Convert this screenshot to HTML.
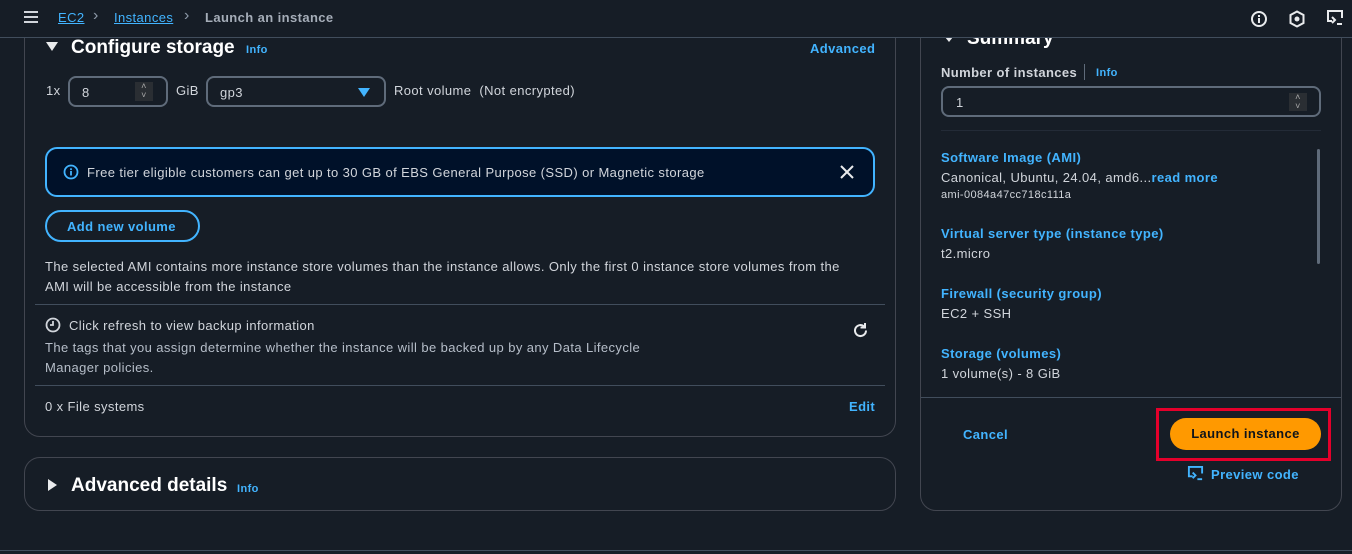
<!DOCTYPE html>
<html><head><meta charset="utf-8"><style>
*{box-sizing:border-box;margin:0;padding:0}
body{width:1352px;height:554px;background:#161d26;font-family:"Liberation Sans",sans-serif;color:#d1d5db;font-size:13px;letter-spacing:0.4px;position:relative;overflow:hidden}
.a{position:absolute}
.hdr{left:0;top:0;width:1352px;height:38px;border-bottom:1px solid #414d5c;background:#161d26;z-index:5}
.z{z-index:6}
.link{color:#42b4ff}
.b{font-weight:bold}
.card{border:1px solid #424650;border-radius:16px}
.info{color:#42b4ff;font-weight:bold;font-size:11px}
.inp{border:2px solid #5f6b7a;border-radius:8px}
.bl{color:#42b4ff;font-weight:bold}
</style></head><body>
<div class="a hdr"></div>
<div class="a z" style="left:24px;top:11px;width:14px;height:2px;background:#d1d5db;box-shadow:0 5px 0 #d1d5db,0 10px 0 #d1d5db"></div>
<div class="a link z" style="left:58px;top:10px;font-size:13px;text-decoration:underline">EC2</div>
<div class="a z" style="left:93px;top:7px;color:#8d99a8;font-size:16px">&#x203A;</div>
<div class="a link z" style="left:114px;top:10px;text-decoration:underline">Instances</div>
<div class="a z" style="left:184px;top:7px;color:#8d99a8;font-size:16px">&#x203A;</div>
<div class="a b z" style="left:205px;top:10px;color:#a5adb8">Launch an instance</div>
<svg class="a z" style="left:1250px;top:10px" width="18" height="18" viewBox="0 0 18 18"><circle cx="9" cy="9" r="7" fill="none" stroke="#e9ebed" stroke-width="2"/><rect x="8" y="8" width="2" height="5" fill="#e9ebed"/><rect x="8" y="5" width="2" height="2" fill="#e9ebed"/></svg>
<svg class="a z" style="left:1288px;top:10px" width="18" height="18" viewBox="0 0 18 18"><path d="M9 1.5L15.5 5v8L9 16.5 2.5 13V5z" fill="none" stroke="#e9ebed" stroke-width="2"/><circle cx="9" cy="9" r="2.5" fill="#e9ebed"/></svg>
<svg class="a z" style="left:1326px;top:9px" width="18" height="18" viewBox="0 0 18 18"><path d="M6 12H2V2h14v7" fill="none" stroke="#e9ebed" stroke-width="2"/><path d="M6 8l3 3-3 3M11 15h5" fill="none" stroke="#e9ebed" stroke-width="2"/></svg>

<!-- left card -->
<div class="a card" style="left:24px;top:-20px;width:872px;height:457px"></div>
<div class="a" style="left:46px;top:42px;width:0;height:0;border-left:6px solid transparent;border-right:6px solid transparent;border-top:9px solid #e9ebed"></div>
<div class="a b" style="left:71px;top:37px;font-size:19px;color:#fff;letter-spacing:0">Configure storage</div>
<div class="a info" style="left:246px;top:44px">Info</div>
<div class="a bl" style="left:810px;top:41px">Advanced</div>
<div class="a" style="left:46px;top:83px">1x</div>
<div class="a inp" style="left:68px;top:76px;width:100px;height:31px"></div>
<div class="a" style="left:82px;top:85px">8</div>
<div class="a" style="left:135px;top:82px;width:18px;height:19px;background:#2a2e33;color:#aaa;font-size:9px;text-align:center;line-height:9px">&#x2C4;<br>&#x2C5;</div>
<div class="a" style="left:176px;top:83px">GiB</div>
<div class="a inp" style="left:206px;top:76px;width:180px;height:31px"></div>
<div class="a" style="left:220px;top:85px">gp3</div>
<div class="a" style="left:358px;top:88px;border-left:6px solid transparent;border-right:6px solid transparent;border-top:9px solid #42b4ff"></div>
<div class="a" style="left:394px;top:83px">Root volume&nbsp; (Not encrypted)</div>

<div class="a" style="left:45px;top:147px;width:830px;height:50px;background:#001129;border:2px solid #42b4ff;border-radius:12px"></div>
<svg class="a" style="left:63px;top:164px" width="16" height="16" viewBox="0 0 16 16"><circle cx="8" cy="8" r="6.5" fill="none" stroke="#42b4ff" stroke-width="1.8"/><rect x="7.1" y="7" width="1.8" height="4.5" fill="#42b4ff"/><rect x="7.1" y="4.3" width="1.8" height="1.8" fill="#42b4ff"/></svg>
<div class="a" style="left:87px;top:165px">Free tier eligible customers can get up to 30 GB of EBS General Purpose (SSD) or Magnetic storage</div>
<svg class="a" style="left:840px;top:165px" width="14" height="14" viewBox="0 0 14 14"><path d="M1 1l12 12M13 1L1 13" stroke="#e9ebed" stroke-width="2"/></svg>

<div class="a" style="left:45px;top:210px;width:155px;height:32px;border:2px solid #42b4ff;border-radius:16px"></div>
<div class="a bl" style="left:67px;top:219px">Add new volume</div>
<div class="a" style="left:45px;top:257px;line-height:20px;width:830px">The selected AMI contains more instance store volumes than the instance allows. Only the first 0 instance store volumes from the<br>AMI will be accessible from the instance</div>
<div class="a" style="left:35px;top:304px;width:850px;height:1px;background:#414d5c"></div>
<svg class="a" style="left:45px;top:317px" width="16" height="16" viewBox="0 0 16 16"><circle cx="8" cy="8" r="6.5" fill="none" stroke="#d1d5db" stroke-width="1.8"/><path d="M8 4v4H5" fill="none" stroke="#d1d5db" stroke-width="1.8"/></svg>
<div class="a" style="left:69px;top:318px">Click refresh to view backup information</div>
<div class="a" style="left:45px;top:338px;line-height:20px;width:640px;color:#b6bec9">The tags that you assign determine whether the instance will be backed up by any Data Lifecycle<br>Manager policies.</div>
<svg class="a" style="left:852px;top:322px" width="17" height="17" viewBox="0 0 17 17"><path d="M14 8.5A5.5 5.5 0 1 1 12 4.3" fill="none" stroke="#e9ebed" stroke-width="2"/><path d="M13 1v4.5H8.5" fill="none" stroke="#e9ebed" stroke-width="2"/></svg>
<div class="a" style="left:35px;top:385px;width:850px;height:1px;background:#414d5c"></div>
<div class="a" style="left:45px;top:399px">0 x File systems</div>
<div class="a bl" style="left:849px;top:399px">Edit</div>

<div class="a card" style="left:24px;top:457px;width:872px;height:54px"></div>
<div class="a" style="left:48px;top:479px;border-top:6px solid transparent;border-bottom:6px solid transparent;border-left:9px solid #e9ebed"></div>
<div class="a b" style="left:71px;top:475px;font-size:19px;color:#fff;letter-spacing:0">Advanced details</div>
<div class="a info" style="left:237px;top:483px">Info</div>

<!-- right card -->
<div class="a card" style="left:920px;top:-20px;width:422px;height:531px"></div>
<div class="a" style="left:945px;top:37px;border-left:4px solid transparent;border-right:4px solid transparent;border-top:5px solid #e9ebed"></div>
<div class="a b" style="left:967px;top:28px;font-size:19px;color:#fff;letter-spacing:0">Summary</div>
<div class="a b" style="left:941px;top:65px">Number of instances</div>
<div class="a" style="left:1084px;top:64px;width:1px;height:16px;background:#5f6b7a"></div>
<div class="a info" style="left:1096px;top:67px">Info</div>
<div class="a inp" style="left:941px;top:86px;width:380px;height:31px"></div>
<div class="a" style="left:956px;top:95px">1</div>
<div class="a" style="left:1289px;top:93px;width:18px;height:18px;background:#2a2e33;color:#aaa;font-size:9px;text-align:center;line-height:9px">&#x2C4;<br>&#x2C5;</div>
<div class="a" style="left:941px;top:130px;width:380px;height:1px;background:#232b37"></div>
<div class="a" style="left:1317px;top:149px;width:3px;height:115px;background:#5f6b7a;border-radius:2px"></div>
<div class="a bl" style="left:941px;top:150px">Software Image (AMI)</div>
<div class="a" style="left:941px;top:170px">Canonical, Ubuntu, 24.04, amd6...<span class="bl">read more</span></div>
<div class="a" style="left:941px;top:189px;font-size:11px">ami-0084a47cc718c111a</div>
<div class="a bl" style="left:941px;top:226px">Virtual server type (instance type)</div>
<div class="a" style="left:941px;top:246px">t2.micro</div>
<div class="a bl" style="left:941px;top:286px">Firewall (security group)</div>
<div class="a" style="left:941px;top:306px">EC2 + SSH</div>
<div class="a bl" style="left:941px;top:346px">Storage (volumes)</div>
<div class="a" style="left:941px;top:366px">1 volume(s) - 8 GiB</div>
<div class="a" style="left:921px;top:397px;width:420px;height:1px;background:#414d5c"></div>
<div class="a bl" style="left:963px;top:427px">Cancel</div>
<div class="a" style="left:1156px;top:408px;width:175px;height:53px;border:3px solid #e4002b"></div>
<div class="a" style="left:1170px;top:418px;width:151px;height:32px;background:#ff9900;border-radius:16px;color:#0f141a;font-weight:bold;text-align:center;line-height:32px">Launch instance</div>
<svg class="a" style="left:1187px;top:465px" width="17" height="17" viewBox="0 0 18 18"><path d="M6 12H2V2h14v7" fill="none" stroke="#42b4ff" stroke-width="2"/><path d="M6 8l3 3-3 3M11 15h5" fill="none" stroke="#42b4ff" stroke-width="2"/></svg>
<div class="a bl" style="left:1211px;top:467px">Preview code</div>
<div class="a" style="left:0;top:550px;width:1352px;height:1px;background:#414d5c"></div>
</body></html>
